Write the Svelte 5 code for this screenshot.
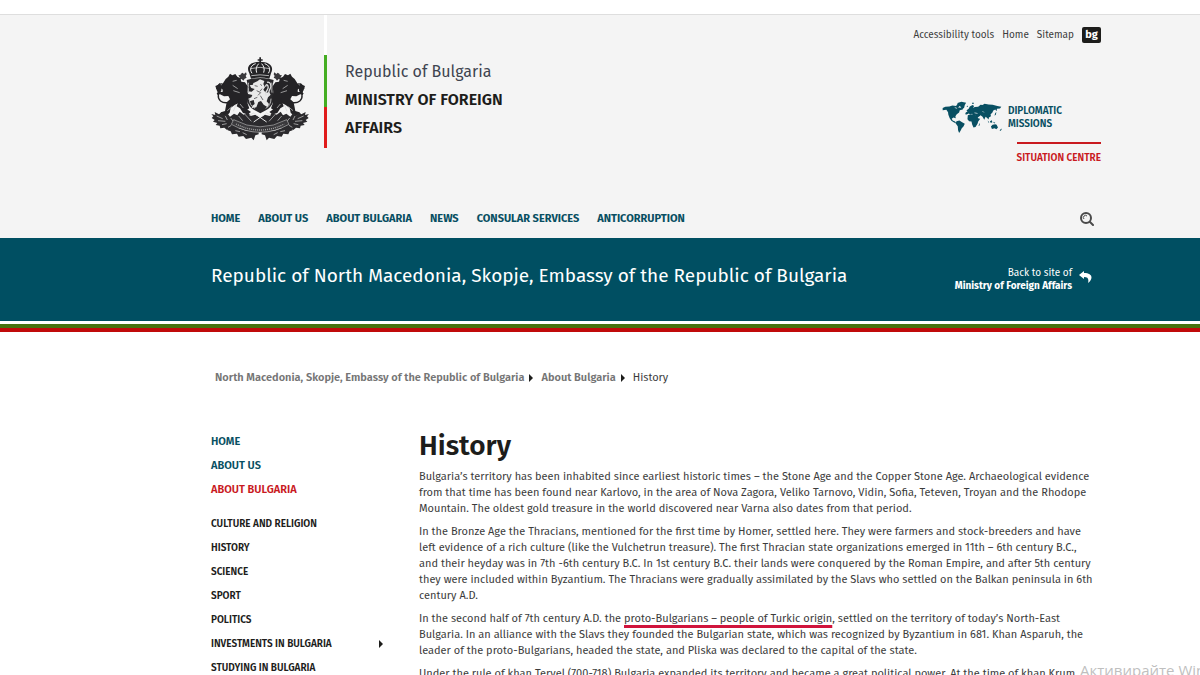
<script>
	const tools = ["Accessibility tools", "Home", "Sitemap"];
	const menu = ["Home", "About us", "About Bulgaria", "News", "Consular services", "Anticorruption"];
	const sections = ["Home", "About us", "About Bulgaria"];
	let activeSection = "About Bulgaria";
	const pages = [
		{ name: "Culture and religion" },
		{ name: "History" },
		{ name: "Science" },
		{ name: "Sport" },
		{ name: "Politics" },
		{ name: "Investments in Bulgaria", more: true },
		{ name: "Studying in Bulgaria" }
	];
	// the supporters are drawn once and mirrored
	const sides = ["", "translate(361 0) scale(-1 1)"];
</script>

<div class="page">
	<div class="browser-edge"></div>

	<header>
		<div class="wrap top">
			<a class="brand" href="#home">
				<svg class="crest" viewBox="33 35 297 252" aria-hidden="true">
					<!-- crown -->
					<path d="M178 36h5v6h5v4h-5v6h-5v-6h-5v-4h5z" fill="#242326" />
					<path d="M148 84C136 62 153 49 180 49s44 13 33 35l-5 16c-18-5-37-5-55 0z" fill="#242326" />
					<g fill="none" stroke="#f4f4f4" stroke-width="3">
						<path d="M156 84c-9-13-2-25 11-29M170 82c-4-11 0-20 6-27M191 82c4-11 0-20-6-27M205 84c9-13 2-25-11-29" />
						<path d="M151 70q29-8 59 0M154 91q26-5 53 0" stroke-width="2" />
					</g>
					<!-- shield with its lion -->
					<path d="M140 104l12-3q28-6 57 0l12 3c-4 14-2 26 0 42 2 24-6 40-22 48l-18 10-18-10c-16-8-24-24-22-48 2-16 3-28-1-42z" fill="#2a292c" />
					<path d="M160 113l12-5 8-6 13 5-3 9 5 10-5 7 8 10 9-3 5 8-8 8-4 12 7 8-4 10-12-8-8-11-8 3-6 16-14 3 2-8 7-5-3-12-12 4-4-8 9-4 3-7-13-3-1-8 12 1 9-8-10-3-5-8 10-2z" fill="#e9e9e9" />
					<path d="M146 112c-3 8 1 20-1 30M215 112c3 8-1 20 1 30M148 160c0 14 6 24 16 29M213 160c0 14-6 24-16 29" fill="none" stroke="#b9b9b9" stroke-width="3" />
					<path d="M199 151c-9-14 11-16 5-29-3-6-7-4-7 2M201 111c12-3 14 12 9 20-5 7-2 13-6 19" fill="none" stroke="#dedede" stroke-width="4" />
					<path d="M164 121l9 2M170 136l12 6-8 8M181 117l5 4M181 151l8 13M162 160l10-4M186 130l-6 8" fill="none" stroke="#6a696c" stroke-width="3" />

					{#each sides as side}
						<g transform={side}>
							<!-- rosette -->
							<path d="M123 85l5-3 4 4 6-5 2 6-3 5 3 5-6 3-4 6-5-5-7 2 1-7-4-6 6-1z" fill="#3a393c" />
							<g fill="#242326">
								<!-- lion: head, mane, body -->
								<path d="M77 101l8-7 5-9 7 5 9-4 6 8 9 5 3 10 11 2 8 12-2 18 3 16-1 18 5 14-9 6-10-2-5-10-8-10-12 6-12 9-3 14-6 6-14 2-10-2 4-7 12-4 3-16 2-10 10-9-5-10-13 1-12-6-7 2-3-5 7-5 10 1 3-6-12-8-10 2-2-6 8-3 8 2 5-4z" />
								<path d="M118 160l12 20 11 12 12 8-10 7-14-4-9-14-10-6z" />
							</g>
							<!-- tail -->
							<path d="M83 172c-18 2-30-8-28-24 1-10-4-16-1-24 2-7 10-11 16-6 6 6 1 12-1 18" fill="none" stroke="#242326" stroke-width="4" />
							<path d="M50 122l9-9 6 11-1 12-5 8-8-8-3-7z" fill="#242326" />
							<!-- oak branch -->
							<path d="M34 206l12 3-2-9 13 7 8-7 7 10 10-6 8 10 12-9 10 5 7-11 12 9 13-8 8 12 14-4 16 10 2 24-18 14-24-3-22-6-15 6-12-5-12 6-8-7-12 2-2-8-12-2 5-6-13-4 5-5-9-6 5-5z" fill="#2b2a2d" />
							<path d="M88 240l20 6 30 10 38 4v7l-10 3-5 15-7-8-16 4-8-9-14 2-5-9-15 2-4-9-9-3z" fill="#2b2a2d" />
							<g fill="none" stroke="#d4d4d4" stroke-width="2">
								<path d="M98 120l15 10M100 136l19 6M98 108l12-3M96 184l-14 12M108 178l-8 20M120 176l10 12" />
								<path d="M50 212l18 8M54 226l22 2M76 212l6 12M92 218l8 10M66 238l14-3M84 246l10-6M116 212l12 14M134 206l20 22M148 210l14-8M128 262l12 6M106 256l14 3" />
							</g>
						</g>
					{/each}
					<path d="M160 202l40 28M201 202l-40 28" stroke="#e9e9e9" stroke-width="3" />
					<!-- ribbon with the motto -->
					<path d="M101 223q79 43 159 0l7 14q-87 48-173 0z" fill="#3a393c" stroke="#b4b4b4" stroke-width="2" />
					<path d="M108 236q72 36 145 0" fill="none" stroke="#a4a4a4" stroke-width="4" stroke-dasharray="3 3" />
				</svg>
				<span class="flag-line"></span>
				<span class="brand-text">
					<span>Republic of Bulgaria</span>
					<strong>MINISTRY OF FOREIGN<br />AFFAIRS</strong>
				</span>
			</a>

			<div class="side">
				<div class="tools">
					{#each tools as tool}
						<a href="#tool">{tool}</a>
					{/each}
					<a class="lang" href="#bg">bg</a>
				</div>
				<a class="missions" href="#missions">
					<svg viewBox="128 260 182 98" aria-hidden="true">
						<g fill="#084f62">
							<path d="M130 281l8-4 12-1 9-3 11 2 4-6 8 4-6 6 10 1 4 5-9 2-2 7-7 5-4 6 1 6-7-2-5 4 3 5 7 3 4 6-7-3-8-5-5-8-4-10-1-8-5-7-11 1z" />
							<path d="M174 266l12-4 14 3-4 7-2 8-6 5-5-9-8-4z" />
							<path d="M171 320l9-2 8 5 8 5-4 8-5 5-4 8-4 6-3-8-1-12-6-8z" />
							<path d="M207 284l4-8 8-4 5 3-4 6 6-3 10-1 7-6 6 1 6-4 12 2 12 1 14 4 12 2-4 5-9 1-1 7-4-5-6 3-3 7-5 4 1 6-6 4-1 6-5-5-4-3-4 9-5-9-6-5-5 5-6 2-5-6-7-1-2-4-6 1-5-2-5 3-5-1 2-5 5-3-3-4z" />
							<path d="M205 302l8-3 11 2 8 3 5 8 5 1-6 8-2 7-6 9-6 2-4-9-2-9-7-1-5-6z" />
							<path d="M274 336l5-5 8-2 4 2 4 8-5 5-5-3-8 2zM264 318l5 5-2 2zM271 320l6-3 1 7-5 1zM280 322l7 3-3 2zM302 345l5-3-3 6-4 1zM239 328l2-2-1 7-3 1zM217 266l4-2 3 3-5 2zM202 275l4-1-1 3h-3zM206 285l4-2v6h-4zM286 298l4-6-1 8-4 4z" />
						</g>
						<path d="M166 279l7 3M225 295l9 2M249 290l4 4" stroke="#f4f4f4" stroke-width="2" fill="none" />
					</svg>
					<span>DIPLOMATIC<br />MISSIONS</span>
				</a>
				<a class="situation" href="#situation">SITUATION CENTRE</a>
			</div>
		</div>

		<nav class="wrap menu">
			{#each menu as item}
				<a href="#menu">{item}</a>
			{/each}
			<button class="search" aria-label="Search">
				<svg viewBox="0 0 14 14" fill="none" stroke="#4a4a4a">
					<circle cx="6" cy="6" r="5" stroke-width="2" />
					<path d="M10 10l3 3" stroke-width="2" stroke-linecap="round" />
					<path d="M4 7a2 2 0 0 1 3-3" stroke-width="1" />
				</svg>
			</button>
		</nav>
	</header>

	<div class="banner">
		<div class="wrap banner-row">
			<h2>Republic of North Macedonia, Skopje, Embassy of the Republic of Bulgaria</h2>
			<a class="back" href="#ministry">
				<span>Back to site of<br /><strong>Ministry of Foreign Affairs</strong></span>
				<svg viewBox="0 0 13 12" aria-hidden="true">
					<path d="M5 0L0 4l5 4V6c4 0 5 2 4 6 6-5 4-10-4-10z" fill="#fff" />
				</svg>
			</a>
		</div>
	</div>
	<div class="stripes"></div>

	<div class="wrap crumbs">
		<a href="#embassy">North Macedonia, Skopje, Embassy of the Republic of Bulgaria</a>
		<i class="arrow"></i>
		<a href="#about">About Bulgaria</a>
		<i class="arrow"></i>
		<span>History</span>
	</div>

	<div class="wrap content">
		<aside>
			<ul class="sections">
				{#each sections as section}
					<li><a href="#section" class:active={section === activeSection}>{section}</a></li>
				{/each}
			</ul>
			<ul class="pages">
				{#each pages as page}
					<li>
						<a href="#page">{page.name}</a>
						{#if page.more}<i class="arrow"></i>{/if}
					</li>
				{/each}
			</ul>
		</aside>
		<main>
			<h1>History</h1>
			<p>
				Bulgaria’s territory has been inhabited since earliest historic times – the Stone Age and the Copper Stone Age. Archaeological evidence<br />
				from that time has been found near Karlovo, in the area of Nova Zagora, Veliko Tarnovo, Vidin, Sofia, Teteven, Troyan and the Rhodope<br />
				Mountain. The oldest gold treasure in the world discovered near Varna also dates from that period.
			</p>
			<p>
				In the Bronze Age the Thracians, mentioned for the first time by Homer, settled here. They were farmers and stock-breeders and have<br />
				left evidence of a rich culture (like the Vulchetrun treasure). The first Thracian state organizations emerged in 11th – 6th century B.C.,<br />
				and their heyday was in 7th -6th century B.C. In 1st century B.C. their lands were conquered by the Roman Empire, and after 5th century<br />
				they were included within Byzantium. The Thracians were gradually assimilated by the Slavs who settled on the Balkan peninsula in 6th<br />
				century A.D.
			</p>
			<p>
				In the second half of 7th century A.D. the <u>proto-Bulgarians – people of Turkic origin</u>, settled on the territory of today’s North-East<br />
				Bulgaria. In an alliance with the Slavs they founded the Bulgarian state, which was recognized by Byzantium in 681. Khan Asparuh, the<br />
				leader of the proto-Bulgarians, headed the state, and Pliska was declared to the capital of the state.
			</p>
			<p>
				Under the rule of khan Tervel (700-718) Bulgaria expanded its territory and became a great political power. At the time of khan Krum
			</p>
		</main>
	</div>

	<div class="watermark">Активирайте Windows</div>
</div>

<style>
	:global(body) {
		margin: 0;
		background: #fff;
	}
	.page {
		position: relative;
		height: 100vh;
		overflow: hidden;
		font-family: "Fira Sans", "Noto Sans", "Liberation Sans", sans-serif;
		font-size: 11px;
		line-height: 16px;
		color: #3c3c3c;
	}
	a {
		color: inherit;
		text-decoration: none;
	}
	ul, p, h1, h2 {
		margin: 0;
		padding: 0;
		list-style: none;
	}
	.wrap {
		padding: 0 99px 0 211px;
	}
	.browser-edge {
		height: 14px;
		border-bottom: 1px solid #dedede;
	}
	header {
		background: #f4f4f4;
	}
	.top {
		display: flex;
		justify-content: space-between;
		height: 185px;
	}
	.brand {
		display: flex;
		align-items: flex-start;
	}
	.crest {
		width: 99px;
		height: 84px;
		margin-top: 42px;
	}
	.flag-line {
		width: 3px;
		height: 133px;
		margin: 0 18px 0 14px;
		background: linear-gradient(#fff 40px, #44ad22 40px, #44ad22 92px, #e01b1b 92px);
	}
	.brand-text {
		margin-top: 43px;
		font-size: 16px;
		line-height: 28px;
		color: #3f4450;
	}
	.brand-text span, .brand-text strong {
		display: block;
	}
	.brand-text strong {
		font-weight: 600;
		color: #1d1d1b;
	}
	.side {
		display: flex;
		flex-direction: column;
		align-items: flex-end;
	}
	.tools {
		display: flex;
		align-items: center;
		gap: 8px;
		margin-top: 12px;
		font-size: 10px;
	}
	.lang {
		width: 19px;
		border-radius: 2px;
		background: #1d1d1b;
		color: #fff;
		font-weight: bold;
		font-size: 11px;
		text-align: center;
	}
	.missions {
		display: flex;
		align-items: center;
		gap: 5px;
		margin: 58px 39px 0 0;
		font-weight: 600;
		font-size: 10px;
		line-height: 13px;
		color: #084f62;
	}
	.missions svg {
		width: 61px;
		height: 33px;
	}
	.situation {
		margin-top: 8px;
		padding-top: 6px;
		border-top: 2px solid #c91a1f;
		font-weight: 600;
		font-size: 10px;
		color: #c91a1f;
	}
	.menu {
		display: flex;
		align-items: center;
		gap: 18px;
		height: 38px;
		font-weight: bold;
		color: #084f62;
	}
	.menu a, aside a {
		text-transform: uppercase;
	}
	.search {
		margin: 0 7px 0 auto;
		padding: 0;
		border: none;
		background: none;
	}
	.search svg {
		display: block;
		width: 14px;
		height: 14px;
	}
	.banner {
		background: #004f62;
		color: #fff;
	}
	.banner-row {
		display: flex;
		justify-content: space-between;
		align-items: center;
		height: 83px;
	}
	h2 {
		margin-bottom: 8px;
		font-weight: normal;
		font-size: 19px;
		line-height: 24px;
		white-space: nowrap;
	}
	.back {
		display: flex;
		align-items: flex-start;
		gap: 7px;
		margin-right: 9px;
		font-size: 10px;
		line-height: 13px;
		text-align: right;
	}
	.back svg {
		width: 13px;
		height: 12px;
		margin-top: 4px;
	}
	.stripes {
		height: 11px;
		background: linear-gradient(#fff 3px, #46720f 3px, #46720f 7px, #c00a0a 7px);
	}
	.crumbs {
		display: flex;
		align-items: center;
		margin: 38px 0 0 4px;
	}
	.crumbs a {
		font-weight: 600;
		color: #757575;
	}
	.arrow {
		width: 0;
		border: 4px solid transparent;
		border-left-color: #1d1d1b;
		border-right: none;
	}
	.crumbs .arrow {
		margin: 0 8px 0 5px;
	}
	.content {
		display: grid;
		grid-template-columns: 172px 1fr;
		gap: 36px;
		margin-top: 44px;
	}
	aside {
		font-weight: 600;
		font-size: 10px;
		line-height: 24px;
		color: #1d1d1b;
	}
	.sections {
		margin-bottom: 10px;
		font-size: 11px;
		color: #084f62;
	}
	.sections .active {
		color: #c91a1f;
	}
	.pages li {
		display: flex;
		justify-content: space-between;
		align-items: center;
	}
	h1 {
		margin-bottom: 7px;
		font-weight: 600;
		font-size: 28px;
		line-height: 32px;
		color: #1d1d1b;
	}
	p {
		margin-bottom: 7px;
		white-space: nowrap;
	}
	u {
		text-decoration: underline 3px #d0143c;
		text-underline-offset: 3px;
		text-decoration-skip-ink: none;
	}
	.watermark {
		position: absolute;
		top: 659px;
		left: 90%;
		width: 10%;
		overflow: hidden;
		font-family: "Open Sans", sans-serif;
		font-size: 15px;
		line-height: 22px;
		white-space: nowrap;
		color: #bfbfbf;
	}
</style>
